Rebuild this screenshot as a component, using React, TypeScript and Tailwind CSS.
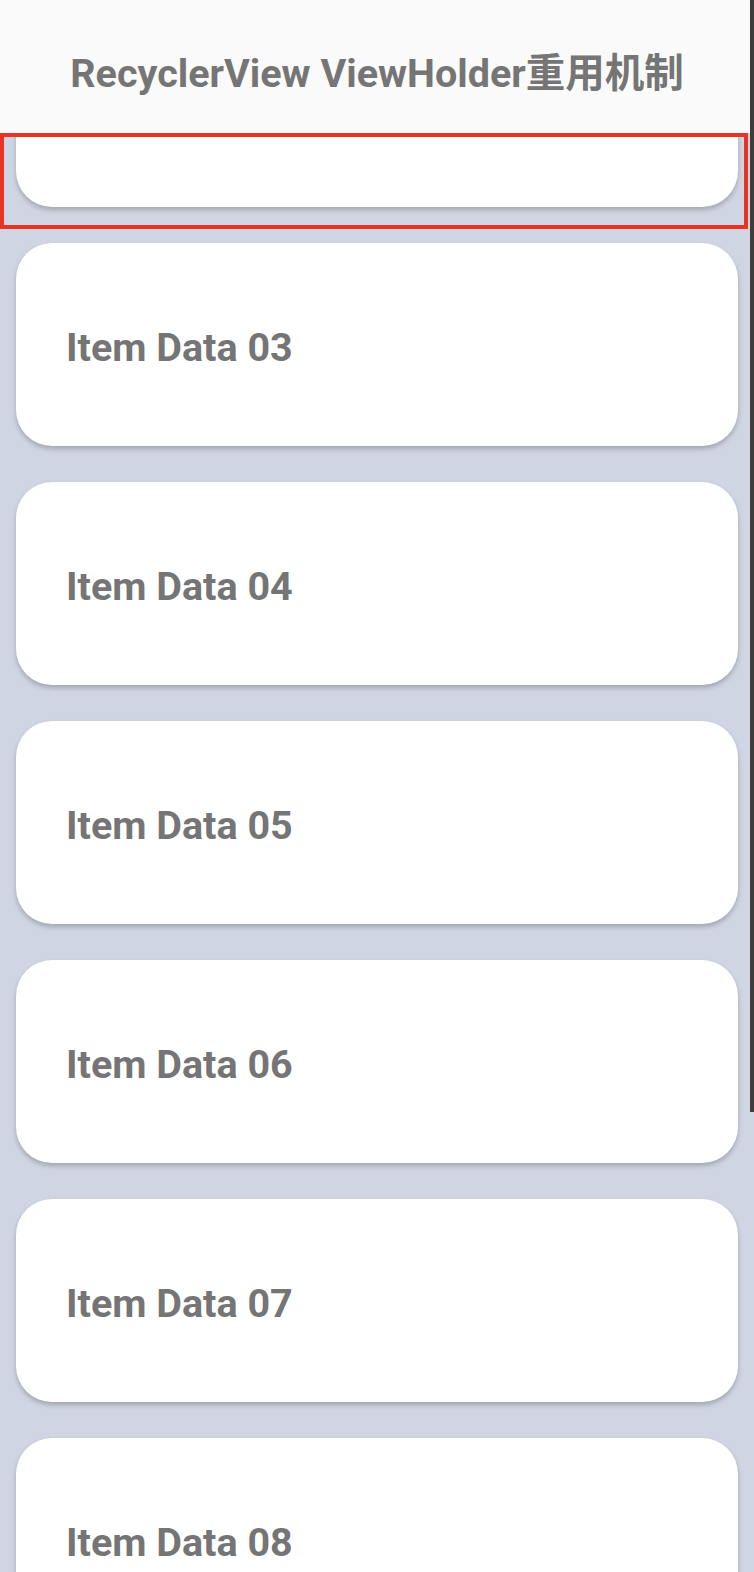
const items = ["02", "03", "04", "05", "06", "07", "08"];

const font = { fontFamily: 'Roboto, "Noto Sans CJK SC", sans-serif' };

function ItemCard({ label, showText }: { label: string; showText: boolean }) {
  return (
    <div className="mx-[16px] flex h-[203px] shrink-0 items-center rounded-[36px] bg-white pl-[50px] pt-[6px] shadow-[0_3px_5px_rgba(0,0,0,0.22)]">
      {showText && (
        <span className="text-[39.5px] font-bold leading-none text-[#757575]">
          Item Data {label}
        </span>
      )}
    </div>
  );
}

export default function App() {
  return (
    <div
      className="relative flex h-[1572px] w-[754px] flex-col overflow-hidden bg-[#cfd5e2]"
      style={font}
    >
      <header className="relative z-10 flex h-[133px] shrink-0 items-center justify-center bg-[#fafafa] pt-[14px]">
        <h1 className="text-[39.5px] font-bold leading-none text-[#757575]">
          RecyclerView ViewHolder重用机制
        </h1>
      </header>

      {/* list scrolled down by 129px */}
      <div className="flex-1 overflow-hidden">
        <div className="-mt-[129px] flex flex-col gap-[36px]">
          {items.map((n, i) => (
            <ItemCard key={n} label={n} showText={i > 0} />
          ))}
        </div>
      </div>

      {/* highlight box over the recycled item */}
      <div className="pointer-events-none absolute left-0 top-[133px] z-20 h-[96px] w-[748px] border-[4px] border-[#ea3323]" />

      {/* overlay scrollbar */}
      <div className="absolute right-0 top-0 z-30 h-[1112px] w-[4px] bg-[#3d3d3d]" />
    </div>
  );
}
